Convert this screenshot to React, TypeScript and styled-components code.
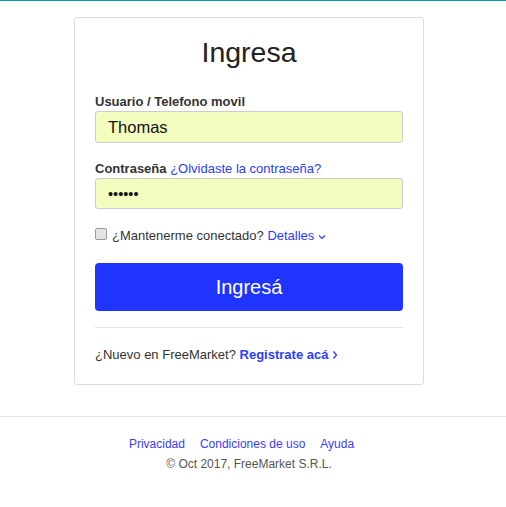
import React from 'react'
import styled, { createGlobalStyle } from 'styled-components'

const GlobalStyle = createGlobalStyle`
  body {
    margin: 0;
    background: #fff;
    font-family: "Liberation Sans", Arial, sans-serif;
    color: #333;
  }
`

const TopBar = styled.div`
  height: 1px;
  background: #00a0b4;
`

const Page = styled.div`
  width: 498px;
`

const Card = styled.div`
  width: 308px;
  margin: 16px auto 0;
  padding: 17px 20px 20px;
  border: 1px solid #ddd;
  border-radius: 3px;
`

const Title = styled.h1`
  margin: 0;
  font-size: 28.5px;
  font-weight: normal;
  line-height: 34px;
  text-align: center;
  color: #222;
`

const Field = styled.div<{ $top: number }>`
  margin-top: ${(p) => p.$top}px;
`

const Label = styled.div`
  font-size: 13px;
  line-height: 18px;
  font-weight: bold;
  color: #333;
`

const LabelLink = styled.a`
  font-weight: normal;
  color: #2a3cff;
  text-decoration: none;
`

const Input = styled.div<{ $dots?: boolean }>`
  box-sizing: border-box;
  height: ${(p) => (p.$dots ? 31 : 32)}px;
  padding: 0 12px;
  display: flex;
  align-items: center;
  background: #f3fdbf;
  border: 1px solid #ccc;
  border-radius: 3px;
  font-size: ${(p) => (p.$dots ? 14.5 : 16.5)}px;
  color: #111;
`

const CheckRow = styled.div`
  margin-top: 18px;
  display: flex;
  align-items: center;
  font-size: 13px;
  line-height: 18px;
  color: #333;
`

const Box = styled.span`
  box-sizing: border-box;
  width: 12px;
  height: 12px;
  margin-right: 5px;
  margin-top: -4px;
  border: 1px solid #999;
  border-radius: 2px;
  background: #e4e4e4;
`

const Link = styled.a<{ $bold?: boolean }>`
  color: #2a3cff;
  text-decoration: none;
  font-weight: ${(p) => (p.$bold ? 'bold' : 'normal')};
  display: inline-flex;
  align-items: center;
  gap: 4px;
`

const Button = styled.button`
  display: block;
  width: 100%;
  height: 48px;
  margin-top: 18px;
  border: none;
  border-radius: 4px;
  background: #1f35ff;
  color: #fff;
  font-family: "Liberation Sans", Arial, sans-serif;
  font-size: 20px;
`

const Divider = styled.hr`
  margin: 16px 0 0;
  border: none;
  border-top: 1px solid #e2e2e2;
`

const SignUp = styled.div`
  margin-top: 18px;
  font-size: 13px;
  line-height: 18px;
  color: #333;
`

const Footer = styled.footer`
  margin-top: 31px;
  border-top: 1px solid #e2e2e2;
  padding-top: 19px;
  font-size: 12px;
  line-height: 16px;
`

const FooterInner = styled.div`
  width: 498px;
  text-align: center;
`

const FooterLinks = styled.div`
  display: flex;
  justify-content: center;
`

const FooterLink = styled.a`
  margin-right: 15px;
  color: #3a3cff;
  text-decoration: none;
`

const Copy = styled.div`
  margin-top: 4px;
  color: #555;
`

const ChevronDown = () => (
  <svg width="8" height="6" viewBox="0 0 8 6" style={{ marginTop: 2 }}>
    <path d="M1 1.5 L4 4.5 L7 1.5" fill="none" stroke="currentColor" strokeWidth="1.2" />
  </svg>
)

const ChevronRight = () => (
  <svg width="6" height="10" viewBox="0 0 6 10">
    <path d="M1.5 1.5 L4.5 5 L1.5 8.5" fill="none" stroke="currentColor" strokeWidth="1.3" />
  </svg>
)

export default function App() {
  return (
    <>
      <GlobalStyle />
      <TopBar />
      <Page>
        <Card>
          <Title>Ingresa</Title>
          <Field $top={24}>
            <Label>Usuario / Telefono movil</Label>
            <Input>Thomas</Input>
          </Field>
          <Field $top={17}>
            <Label>
              Contraseña <LabelLink href="#">¿Olvidaste la contraseña?</LabelLink>
            </Label>
            <Input $dots>••••••</Input>
          </Field>
          <CheckRow>
            <Box />
            ¿Mantenerme conectado?&nbsp;
            <Link href="#">
              Detalles <ChevronDown />
            </Link>
          </CheckRow>
          <Button>Ingresá</Button>
          <Divider />
          <SignUp>
            ¿Nuevo en FreeMarket?{' '}
            <Link href="#" $bold>
              Registrate acá <ChevronRight />
            </Link>
          </SignUp>
        </Card>
      </Page>
      <Footer>
        <FooterInner>
          <FooterLinks>
            <FooterLink href="#">Privacidad</FooterLink>
            <FooterLink href="#">Condiciones de uso</FooterLink>
            <FooterLink href="#">Ayuda</FooterLink>
          </FooterLinks>
          <Copy>© Oct 2017, FreeMarket S.R.L.</Copy>
        </FooterInner>
      </Footer>
    </>
  )
}
